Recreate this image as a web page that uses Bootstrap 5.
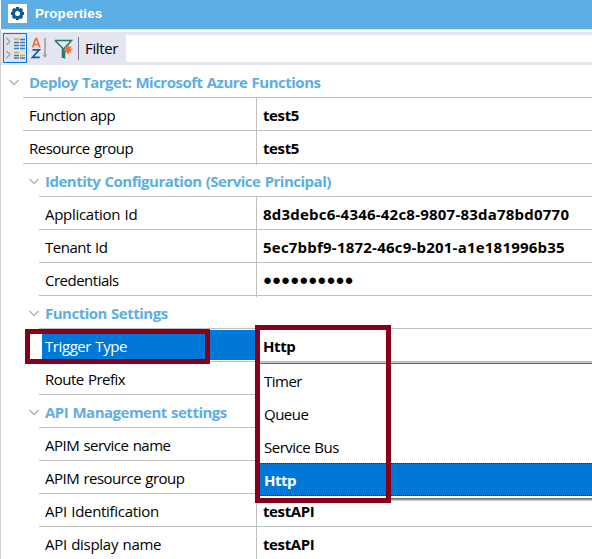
<!DOCTYPE html>
<html lang="en">
<head>
<meta charset="utf-8">
<title>Properties</title>
<link href="https://cdn.jsdelivr.net/npm/bootstrap@5.3.0/dist/css/bootstrap.min.css" rel="stylesheet">
<style>
body{font-family:"Open Sans","Noto Sans",sans-serif;font-size:15px;line-height:32px;letter-spacing:-.5px;word-spacing:.8px;color:#000;background:#fff;overflow:hidden}
.panel{width:592px;height:559px}
.titlebar{height:29px;background:#5daee5;color:#fff;font:bold 13.3px/27px "Liberation Sans",sans-serif;letter-spacing:.15px;padding-left:7px;margin-left:1px}
.gear{width:19px;height:19px;margin:4px 8px 0 0}
.body-pane{border-left:1px solid #cfcfcf;height:530px}
.toolstrip{height:36px;border-top:1px solid #dfe9f2;padding-top:2px}
.toolbar{height:33px;background:#e5e5f0}
.tool-icons{width:83px;height:33px}
.filter-label{width:42px;line-height:33px;letter-spacing:-.4px}
.search{height:27px;background:#fff}
.prop{height:33px;border-bottom:1px solid #bfbfbf;margin-left:22px;white-space:nowrap;line-height:34px}
.prop.sub{margin-left:38px}
.prop .key{padding-left:6px;width:233px;height:32px}
.prop.sub .key{width:217px}
.prop .val{border-left:1px solid #bfbfbf;padding-left:6px;font-weight:700;height:34px;letter-spacing:-.4px}
.prop .guid{letter-spacing:.22px}
.prop .masked{font-family:"Noto Sans",sans-serif;letter-spacing:0;line-height:33px}
.prop .loose{letter-spacing:-.29px}
.cat{color:#5daee5;font-weight:700;padding-top:1px}
.cat svg{width:10px;height:7px;margin:1px 10px 0 -14px}
.cat.sub svg{margin:1px 6px 0 -10px}
.prop.sub .picked{background:#0078d7;color:#fff;height:30px;line-height:32px;margin:1px 0 0 3px;padding-left:3px;width:214px;letter-spacing:-.42px}
.choices{left:257px;top:363px;width:345px;height:135px;background:#fff;border-top:1px solid #646464;box-shadow:0 1px 2px 1px #0009;z-index:2;line-height:34px}
.choice{height:33px;padding-left:7px}
.chosen{background:#0078d7;color:#fff;font-weight:700;outline:1px dotted #3b2a1a;outline-offset:-1px}
.frame{border:5px solid #85001a;z-index:3}
.frame-key{left:25px;top:329px;width:185px;height:35px}
.frame-val{left:255px;top:325px;width:136px;height:178px}
</style>
<script src="https://cdn.jsdelivr.net/npm/bootstrap@5.3.0/dist/js/bootstrap.bundle.min.js"></script>
</head>
<body>
<svg class="d-none"><symbol id="chev" viewBox="0 0 10 7"><path d="M.5 1 5 5.500 9.500 1" fill="none" stroke="#a9b2ba" stroke-width="1.300"/></symbol></svg>
<div class="panel position-relative overflow-hidden">
<div class="titlebar d-flex">
<svg class="gear" viewBox="0 0 19 19"><path d="M0 0h19v19H0z" fill="#fff"/><g fill="#0b5a96"><circle cx="9.500" cy="9.500" r="5.600"/><path id="tooth" d="M8 3h3v13H8zM3 8h13v3H3z"/><use href="#tooth" transform="rotate(45 9.500 9.500)"/></g><circle cx="9.500" cy="9.500" r="2.500" fill="#fff"/></svg>
<span>Properties</span></div>
<div class="body-pane">
<div class="toolstrip">
<div class="toolbar d-flex align-items-center">
<svg class="tool-icons flex-shrink-0" viewBox="1 32 83 33" fill="none">
<path d="M3.500 33.500h23v29h-23z" fill="#dfe2ee" stroke="#0078d7"/>
<path d="m6.500 38 3.500 3.500L6.500 45M6.500 51l3.500 3.500L6.500 58" stroke="#9a9ea6" stroke-width="1.200"/>
<path d="M14 39h5M14 52.500h5M20 55.500h5" stroke="#f0a030" stroke-width="1.600"/>
<path d="M20 39.500h5M14 42.500h5M20 42.500h5M14 45.500h5M20 45.500h5M14 48.500h5M20 48.500h5M14 55.500h5M14 58h5M20 58h5" stroke="#3b7eb0" stroke-width="1.400"/>
<path d="M32.500 47.500 35.800 38.500h.8l3.300 9M33.500 44.500h5.500" stroke="#f8622c" stroke-width="1.600"/>
<path d="M32.500 49.800h6.800l-6.800 7.500h7.300" stroke="#0b5fa5" stroke-width="1.700"/>
<path d="M45 38v17" stroke="#a0a0a0" stroke-width="1.600"/><path d="M42.500 54.500h5L45 58z" fill="#a0a0a0"/>
<path d="M55 40.500h16.500L64.500 48v10.500M55 40.500l7.500 7.500v10" stroke="#1e7a75" stroke-width="1.500"/><path d="M63.500 48v10" stroke="#1e7a75" stroke-width="2"/>
<path d="M68 45v9M63.500 49.500h9M65 46.500l6 6M71 46.500l-6 6" stroke="#ff6a33" stroke-width="1.700"/>
<path d="M78.500 37v23" stroke="#74739b"/>
</svg>
<div class="filter-label">&#8202;Filter</div>
<div class="search flex-grow-1"></div>
</div></div>
<div class="prop cat d-flex align-items-center"><svg><use href="#chev"/></svg>Deploy Target: Microsoft Azure Functions</div>
<div class="prop d-flex"><div class="key">Function app</div><div class="val">test5</div></div>
<div class="prop d-flex"><div class="key">Resource group</div><div class="val">test5</div></div>
<div class="prop sub cat d-flex align-items-center"><svg><use href="#chev"/></svg>Identity Configuration (Service Principal)</div>
<div class="prop sub d-flex"><div class="key loose">Application Id</div><div class="val guid">8d3debc6-4346-42c8-9807-83da78bd0770</div></div>
<div class="prop sub d-flex"><div class="key">Tenant Id</div><div class="val guid">5ec7bbf9-1872-46c9-b201-a1e181996b35</div></div>
<div class="prop sub d-flex"><div class="key">Credentials</div><div class="val masked">●●●●●●●●●●</div></div>
<div class="prop sub cat d-flex align-items-center"><svg><use href="#chev"/></svg>Function Settings</div>
<div class="prop sub d-flex"><div class="key picked">Trigger Type</div><div class="val">Http</div></div>
<div class="prop sub d-flex"><div class="key">Route Prefix</div></div>
<div class="prop sub cat d-flex align-items-center"><svg><use href="#chev"/></svg>API Management settings</div>
<div class="prop sub d-flex"><div class="key">APIM service name</div></div>
<div class="prop sub d-flex"><div class="key">APIM resource group</div></div>
<div class="prop sub d-flex"><div class="key loose">API Identification</div><div class="val">testAPI</div></div>
<div class="prop sub d-flex"><div class="key loose">API display name</div><div class="val">testAPI</div></div>
</div>
<div class="choices position-absolute">
<div class="choice">Timer</div>
<div class="choice">Queue</div>
<div class="choice">Service Bus</div>
<div class="choice chosen">Http</div>
</div>
<div class="frame frame-key position-absolute"></div>
<div class="frame frame-val position-absolute"></div>
</div>
</body>
</html>
